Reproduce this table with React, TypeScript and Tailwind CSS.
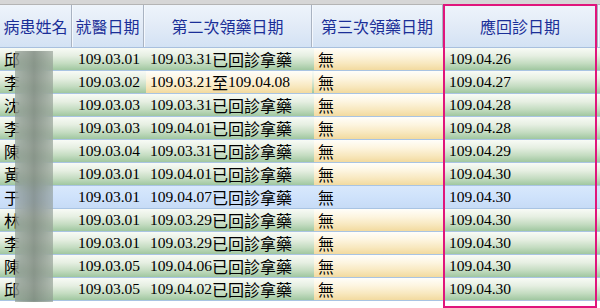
import React from "react";

const NUM = "font-[family-name:'Liberation_Serif','Noto_Sans_CJK_TC',serif] text-[15.5px]";
const CJK = "font-[family-name:'Noto_Sans_CJK_TC','Noto_Sans_CJK_SC',sans-serif] text-[16px] leading-none";

const GREEN = "bg-[linear-gradient(180deg,#f8fbf6_0%,#e6efe2_35%,#c4dcc1_70%,#a0c7a0_100%)]";
const YELLOW = "bg-[linear-gradient(180deg,#fffefa_0%,#fdf5e0_35%,#f8e8bf_70%,#f2da9f_100%)]";
const BLUE = "bg-[linear-gradient(180deg,#d8e8fc_0%,#cfe2fb_50%,#c6dbf6_100%)]";

type Row = {
  name: string;
  d1: string;
  d2: string;
  d2suffix: string;
  d2b?: string;
  d3: string;
  d4: string;
  yellow2?: boolean;
  selected?: boolean;
};

const rows: Row[] = [
  { name: "邱", d1: "109.03.01", d2: "109.03.31", d2suffix: "已回診拿藥", d3: "無", d4: "109.04.26" },
  { name: "李", d1: "109.03.02", d2: "109.03.21", d2suffix: "至", d2b: "109.04.08", d3: "無", d4: "109.04.27", yellow2: true },
  { name: "沈", d1: "109.03.03", d2: "109.03.31", d2suffix: "已回診拿藥", d3: "無", d4: "109.04.28" },
  { name: "李", d1: "109.03.03", d2: "109.04.01", d2suffix: "已回診拿藥", d3: "無", d4: "109.04.28" },
  { name: "陳", d1: "109.03.04", d2: "109.03.31", d2suffix: "已回診拿藥", d3: "無", d4: "109.04.29" },
  { name: "黃", d1: "109.03.01", d2: "109.04.01", d2suffix: "已回診拿藥", d3: "無", d4: "109.04.30" },
  { name: "于", d1: "109.03.01", d2: "109.04.07", d2suffix: "已回診拿藥", d3: "無", d4: "109.04.30", selected: true },
  { name: "林", d1: "109.03.01", d2: "109.03.29", d2suffix: "已回診拿藥", d3: "無", d4: "109.04.30" },
  { name: "李", d1: "109.03.01", d2: "109.03.29", d2suffix: "已回診拿藥", d3: "無", d4: "109.04.30" },
  { name: "陳", d1: "109.03.05", d2: "109.04.06", d2suffix: "已回診拿藥", d3: "無", d4: "109.04.30" },
  { name: "邱", d1: "109.03.05", d2: "109.04.02", d2suffix: "已回診拿藥", d3: "無", d4: "109.04.30" },
];

function HeaderCell({ w, label, last }: { w: string; label: string; last?: boolean }) {
  return (
    <div
      className={`${w} h-full flex items-center justify-center ${
        last ? "" : "border-r border-r-[#a9b3c2] shadow-[1px_0_0_#f4f8fd]"
      }`}
    >
      <span className={`${CJK} text-[#1b2f98]`}>{label}</span>
    </div>
  );
}

export default function App() {
  return (
    <div className="relative w-[600px] h-[308px] overflow-hidden bg-white">
      <div className="h-[5px] bg-[#d6d6d6] border-b border-b-[#b4b4b4]" />
      <div className="flex h-[43px] bg-[linear-gradient(180deg,#eef4fb_0%,#e2ebf7_50%,#d3e2f4_100%)] border-b border-b-[#a8c0de]">
        <HeaderCell w="w-[72px] shrink-0" label="病患姓名" />
        <HeaderCell w="w-[72px] shrink-0" label="就醫日期" />
        <HeaderCell w="w-[168px] shrink-0" label="第二次領藥日期" />
        <HeaderCell w="w-[131px] shrink-0" label="第三次領藥日期" />
        <HeaderCell w="w-[155px] shrink-0" label="應回診日期" />
        <div className="flex-1" />
      </div>
      <div className="flex flex-col">
        {rows.map((r, i) => {
          const base = r.selected ? BLUE : GREEN;
          const c2 = r.selected ? BLUE : r.yellow2 ? YELLOW : GREEN;
          const c3 = r.selected ? BLUE : YELLOW;
          return (
            <div key={i} className="flex h-[23px] border-b border-b-[#a9c4e3] text-black">
              <div className={`w-[72px] shrink-0 ${base} flex items-center pl-[4px]`}>
                <span className={CJK}>{r.name}</span>
              </div>
              <div className={`w-[72px] shrink-0 ${base} flex items-center pl-[6px]`}>
                <span className={NUM}>{r.d1}</span>
              </div>
              <div className={`w-[2px] shrink-0 ${base}`} />
              <div className={`w-[166px] shrink-0 ${c2} flex items-center pl-[4px] whitespace-nowrap`}>
                <span className={NUM}>{r.d2}</span>
                <span className={CJK}>{r.d2suffix}</span>
                {r.d2b && <span className={NUM}>{r.d2b}</span>}
              </div>
              <div className={`w-[2px] shrink-0 ${base}`} />
              <div className={`w-[129px] shrink-0 ${c3} flex items-center pl-[4px]`}>
                <span className={CJK}>{r.d3}</span>
              </div>
              <div className={`flex-1 ${base} flex items-center pl-[6px]`}>
                <span className={NUM}>{r.d4}</span>
              </div>
            </div>
          );
        })}
      </div>
      {/* privacy blur over names */}
      <div className="absolute left-[15px] top-[51px] w-[38px] h-[251px] backdrop-blur-[6px] bg-[linear-gradient(90deg,rgba(128,138,130,0.5)_0%,rgba(112,122,114,0.72)_50%,rgba(128,138,130,0.5)_100%)]" />
      {/* highlight annotation */}
      <div className="absolute left-[443px] top-[4px] w-[154px] h-[304px] border-2 border-[#e0157c] pointer-events-none" />
    </div>
  );
}
